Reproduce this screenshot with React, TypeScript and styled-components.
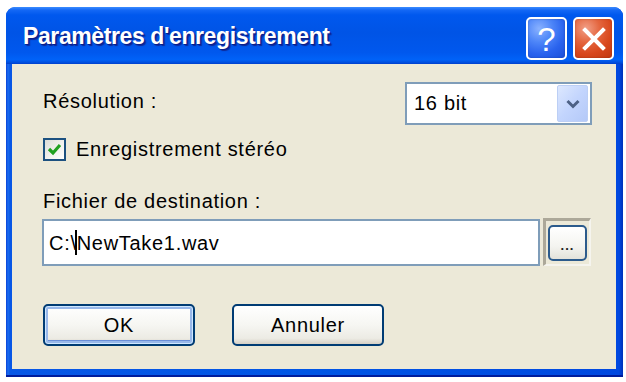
import React from 'react';
import styled, { createGlobalStyle } from 'styled-components';

const GlobalStyle = createGlobalStyle`
	html, body {
		margin: 0;
		padding: 0;
		background: #ffffff;
	}
	#root {
		width: 626px;
		height: 382px;
		overflow: hidden;
	}
`;

const uiFont = `'Liberation Sans', Arial, sans-serif`;

const Window = styled.div`
	width: 617px;
	height: 370px;
	margin: 7px 0 0 6px;
	display: flex;
	flex-direction: column;
	border-radius: 9px 9px 0 0;
	overflow: hidden;
	background: linear-gradient(to right, #0841d8 0, #1a6cf0 2px, #0857e6 4px, #0055e5 50%, #0048e0 calc(100% - 4px), #0030b8 100%);
	box-shadow: inset 0 -2px 0 #001c9c;
`;

const TitleBar = styled.div`
	height: 57px;
	flex: none;
	display: flex;
	align-items: center;
	justify-content: space-between;
	padding: 0 9px 0 17px;
	background: linear-gradient(
		to bottom,
		#3b8cff 0,
		#1468f5 3px,
		#0058ee 8px,
		#0054e6 45%,
		#0058ee 80%,
		#0062f8 92%,
		#0050e0 97%,
		#003fcc 100%
	);
`;

const Title = styled.div`
	color: #ffffff;
	font-family: ${uiFont};
	font-weight: bold;
	font-size: 23px;
	letter-spacing: -0.4px;
	text-shadow: 1px 1px 0 #0a1e8c, 2px 2px 1px #0c2a9a;
	margin-top: 2px;
`;

const CaptionButtons = styled.div`
	display: flex;
	gap: 6px;
	margin-top: 6px;
`;

const CaptionButton = styled.div<{ $kind: 'help' | 'close' }>`
	width: 41px;
	height: 43px;
	box-sizing: border-box;
	border: 2px solid #ffffff;
	border-radius: 5px;
	display: flex;
	align-items: center;
	justify-content: center;
	color: #ffffff;
	background: ${(p) =>
		p.$kind === 'close'
			? 'radial-gradient(circle at 30% 25%, #f2a088 0, #e4663f 35%, #d8471c 65%, #c03810 100%)'
			: 'radial-gradient(circle at 30% 25%, #8ab2ff 0, #4d85f8 35%, #2a63ee 65%, #1a4fd8 100%)'};
	box-shadow: inset 0 0 2px rgba(0, 0, 0, 0.25);
`;

const HelpGlyph = styled.span`
	font-family: ${uiFont};
	font-size: 33px;
	line-height: 1;
	color: #ffffff;
	margin-top: 1px;
`;

const Body = styled.div`
	flex: 1;
	margin: 0 7px 8px 6px;
	background: #ece9d8;
	padding: 18px 24px 0 31px;
	display: flex;
	flex-direction: column;
	font-family: ${uiFont};
	font-size: 20px;
	letter-spacing: 0.7px;
	color: #000000;
`;

const Row = styled.div<{ $top?: number; $gap?: number }>`
	display: flex;
	align-items: center;
	margin-top: ${(p) => p.$top ?? 0}px;
	gap: ${(p) => p.$gap ?? 0}px;
`;

const SpacedRow = styled(Row)`
	justify-content: space-between;
`;

const Label = styled.div<{ $shift?: number }>`
	line-height: 24px;
	white-space: nowrap;
	position: relative;
	top: ${(p) => p.$shift ?? 0}px;
`;

const Select = styled.div`
	width: 187px;
	height: 43px;
	box-sizing: border-box;
	border: 2px solid #7f9db9;
	background: #ffffff;
	display: flex;
	align-items: center;
	justify-content: space-between;
	padding: 0 2px 0 7px;
`;

const SelectArrow = styled.div`
	width: 31px;
	height: 37px;
	box-sizing: border-box;
	border-radius: 2px;
	border: 1px solid #bccff5;
	background: linear-gradient(to bottom right, #dde8fe 0, #c3d5fd 50%, #b4c9f8 100%);
	display: flex;
	align-items: center;
	justify-content: center;
`;

const Checkbox = styled.div`
	width: 23px;
	height: 23px;
	box-sizing: border-box;
	border: 2px solid #1c5180;
	background: linear-gradient(to bottom right, #dcdcd7 0, #f4f4f0 60%, #ffffff 100%);
	display: flex;
	align-items: center;
	justify-content: center;
`;

const Field = styled.div`
	width: 498px;
	height: 47px;
	box-sizing: border-box;
	border: 2px solid #7f9db9;
	background: #ffffff;
	display: flex;
	align-items: center;
	padding-left: 5px;
	margin-left: -1px;
`;

const Caret = styled.span`
	display: inline-block;
	width: 2px;
	height: 25px;
	background: #000000;
	margin: 0 0 0 -2px;
	vertical-align: -5px;
`;

const BrowseFrame = styled.div`
	width: 48px;
	height: 48px;
	box-sizing: border-box;
	margin-left: 3px;
	border-top: 3px solid #aca899;
	border-left: 3px solid #aca899;
	border-right: 2px solid #f5f4ee;
	border-bottom: 2px solid #f5f4ee;
	background: #ece9d8;
	display: flex;
	align-items: center;
	justify-content: center;
`;

const BrowseButton = styled.div`
	width: 39px;
	height: 36px;
	box-sizing: border-box;
	border: 2px solid #2c5b8c;
	border-radius: 5px;
	background: linear-gradient(to bottom, #ffffff 0, #f4f4f0 60%, #e3e2da 100%);
	display: flex;
	align-items: flex-end;
	justify-content: center;
	font-family: ${uiFont};
	font-size: 13px;
	font-weight: bold;
	line-height: 1;
	padding-bottom: 7px;
	letter-spacing: 1px;
	color: #222;
`;

const Button = styled.div<{ $focused?: boolean }>`
	width: 152px;
	height: 42px;
	box-sizing: border-box;
	border: 2px solid #003c74;
	border-radius: 5px;
	display: flex;
	align-items: center;
	justify-content: center;
	background: linear-gradient(to bottom, #ffffff 0, #f6f6f2 50%, #ecebe4 85%, #d6d0c5 100%);
	box-shadow: ${(p) =>
		p.$focused ? 'inset 0 0 0 1px #cee7ff, inset 0 0 0 3px #98b8ea, inset 0 -3px 0 1px #6b8fd8' : 'none'};
	font-family: ${uiFont};
	font-size: 20px;
	letter-spacing: 0.7px;
	color: #000;
`;

export default function App() {
	return (
		<>
			<GlobalStyle />
			<Window>
				<TitleBar>
					<Title>Paramètres d'enregistrement</Title>
					<CaptionButtons>
						<CaptionButton $kind="help">
							<HelpGlyph>?</HelpGlyph>
						</CaptionButton>
						<CaptionButton $kind="close">
							<svg width="24" height="24" viewBox="0 0 24 24">
								<path d="M3 3 L21 21 M21 3 L3 21" stroke="#ffffff" strokeWidth="4" strokeLinecap="square" />
							</svg>
						</CaptionButton>
					</CaptionButtons>
				</TitleBar>
				<Body>
					<SpacedRow>
						<Label $shift={-3}>Résolution :</Label>
						<Select>
							<span>16 bit</span>
							<SelectArrow>
								<svg width="14" height="10" viewBox="0 0 14 10">
									<path d="M1.5 2 L7 7.5 L12.5 2" fill="none" stroke="#4d6185" strokeWidth="3" />
								</svg>
							</SelectArrow>
						</Select>
					</SpacedRow>
					<Row $top={12} $gap={10}>
						<Checkbox>
							<svg width="15" height="13" viewBox="0 0 15 13">
								<path d="M2 6 L6 10 L13 2" fill="none" stroke="#21a121" strokeWidth="3.2" />
							</svg>
						</Checkbox>
						<Label>Enregistrement stéréo</Label>
					</Row>
					<Row $top={28}>
						<Label>Fichier de destination :</Label>
					</Row>
					<Row $top={5}>
						<Field>
							<span>
								{'C:\\'}
								<Caret />
								{'NewTake1.wav'}
							</span>
						</Field>
						<BrowseFrame>
							<BrowseButton>...</BrowseButton>
						</BrowseFrame>
					</Row>
					<Row $top={38} $gap={37}>
						<Button $focused>OK</Button>
						<Button>Annuler</Button>
					</Row>
				</Body>
			</Window>
		</>
	);
}
